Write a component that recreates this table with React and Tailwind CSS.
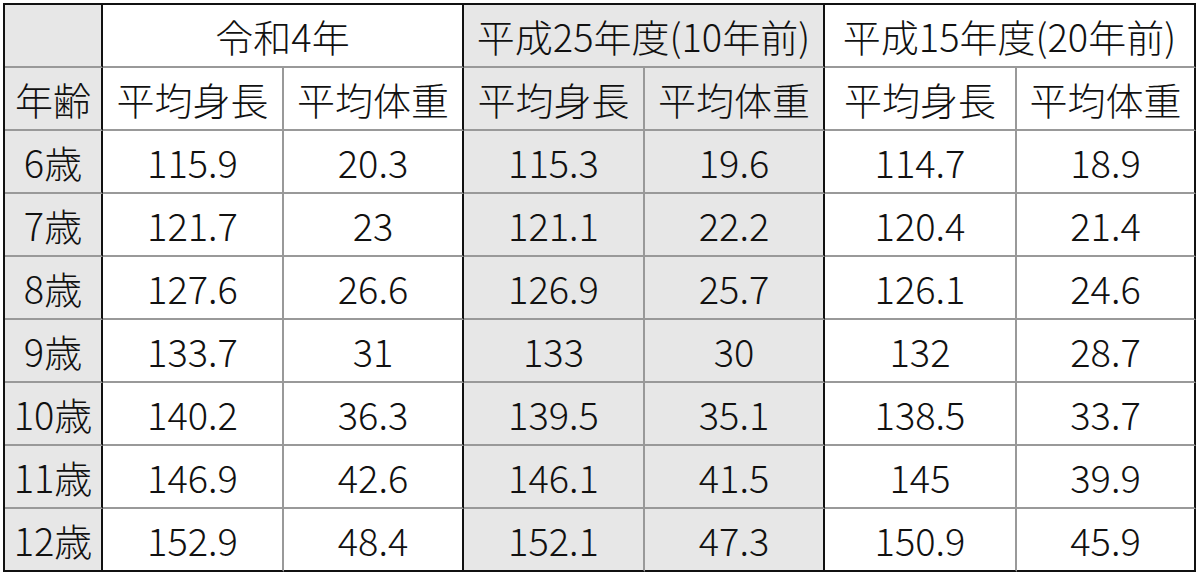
const rows = [
  ['6歳', '115.9', '20.3', '115.3', '19.6', '114.7', '18.9'],
  ['7歳', '121.7', '23', '121.1', '22.2', '120.4', '21.4'],
  ['8歳', '127.6', '26.6', '126.9', '25.7', '126.1', '24.6'],
  ['9歳', '133.7', '31', '133', '30', '132', '28.7'],
  ['10歳', '140.2', '36.3', '139.5', '35.1', '138.5', '33.7'],
  ['11歳', '146.9', '42.6', '146.1', '41.5', '145', '39.9'],
  ['12歳', '152.9', '48.4', '152.1', '47.3', '150.9', '45.9'],
];

// per-column right border + background
const colCls = [
  'bg-[#e7e7e7] border-r-2 border-r-[#111]',
  'bg-white border-r-2 border-r-[#999]',
  'bg-white border-r-2 border-r-[#111]',
  'bg-[#e7e7e7] border-r-2 border-r-[#999]',
  'bg-[#e7e7e7] border-r-2 border-r-[#111]',
  'bg-white border-r-2 border-r-[#999]',
  'bg-white border-r-2 border-r-[#111]',
];

const groups = [
  { label: '令和4年', cls: 'bg-white' },
  { label: '平成25年度(10年前)', cls: 'bg-[#e7e7e7]' },
  { label: '平成15年度(20年前)', cls: 'bg-white' },
];

const subHeads = ['年齢', '平均身長', '平均体重', '平均身長', '平均体重', '平均身長', '平均体重'];

const cell = 'flex items-center justify-center h-[63px] border-b-2 leading-none';

export default function App() {
  return (
    <div
      className="min-h-screen bg-white pt-[3px] pl-[3px] text-[#111] text-[38px] font-light"
      style={{ fontFamily: '"Noto Sans CJK JP", "Noto Sans", sans-serif' }}
    >
      <div className="inline-grid grid-cols-[98px_181px_180px_181px_180px_192px_179px] border-l-2 border-t-2 border-[#111]">
        <div className={`${cell} border-b-[#999] bg-[#e7e7e7] border-r-2 border-r-[#111]`}></div>
        {groups.map((g) => (
          <div key={g.label} className={`${cell} col-span-2 border-b-[#999] ${g.cls} border-r-2 border-r-[#111]`}>
            {g.label}
          </div>
        ))}

        {subHeads.map((h, i) => (
          <div key={'h' + i} className={`${cell} border-b-[#999] ${colCls[i]}`}>
            {h}
          </div>
        ))}

        {rows.map((r, ri) =>
          r.map((v, ci) => (
            <div
              key={ri + '-' + ci}
              className={`${cell} ${ri === rows.length - 1 ? 'border-b-[#111]' : 'border-b-[#999]'} ${colCls[ci]}`}
            >
              {v}
            </div>
          ))
        )}
      </div>
    </div>
  );
}
